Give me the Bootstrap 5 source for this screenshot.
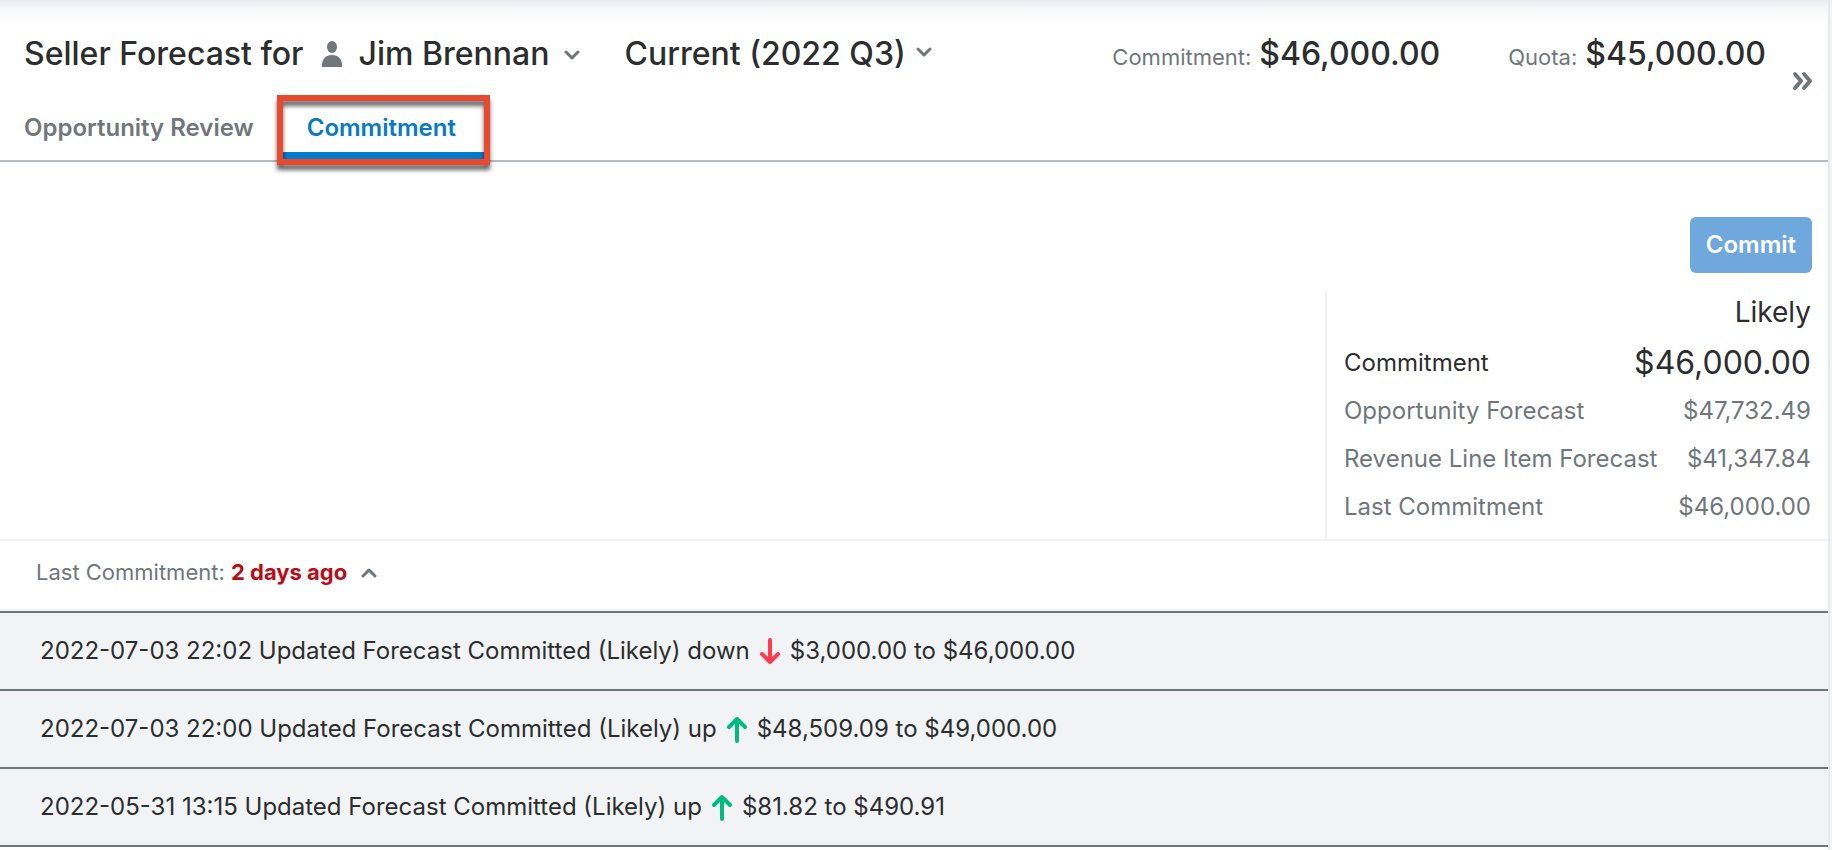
<!DOCTYPE html>
<html lang="en">
<head>
<meta charset="utf-8">
<meta name="viewport" content="width=device-width, initial-scale=1">
<title>Seller Forecast</title>
<link href="https://cdn.jsdelivr.net/npm/bootstrap@5.3.0/dist/css/bootstrap.min.css" rel="stylesheet">
<style>
  body { font-family: Inter, "Liberation Sans", sans-serif; font-size: 24px; line-height: 32px; color: #2b2d2e; background: #f1f3f5; }
  .panel { background: #fff; border-right: 2px solid #e6eaed; margin-right: 2px; min-height: 100vh; }
  .top-shade { background: linear-gradient(#e8eaed, #f6f7f8 8px, #fff 22px); padding: 32px 62px 0 24px; }
  .title-text { font-size: 32px; line-height: 44px; font-weight: 500; }
  .muted { color: #6f777b; }
  .meta-label { font-size: 22px; }
  .plain { background: none; border: 0; padding: 0; color: inherit; }
  .plain svg { display: block; }
  .seller { gap: 15px; }
  .period { margin-left: 44px; }
  .quota { margin-left: 68px; }
  .rail-btn { top: 70px; right: 14px; }
  .tab-bar { border-bottom: 2px solid #b5bcc0; padding: 36px 0 0 24px; }
  .tab-bar a { font-weight: 600; color: #6f777b; text-decoration: none; padding: 0 0 16px; }
  .tab-bar a.current { color: #0679c8; padding: 0 28px 8px 24px; margin-left: 29px; border-bottom: 8px solid #0679c8; }
  .tab-bar a.current::after { content: ""; position: absolute; inset: -17px -6px -13px; border: 6px solid #e8492f; filter: drop-shadow(0 5px 2px #0009); }
  .btn-commit { background: #6fa8dc; color: #fff; font-weight: 600; line-height: 32px; padding: 12px 16px; border: 0; border-radius: 6px; margin: 0 16px 18px 0; }
  .summary { border-bottom: 2px solid #f1f2f3; padding-top: 55px; }
  .totals { width: 503px; max-width: 100%; border-left: 2px solid #f1f2f3; padding: 0 16px 8px; }
  .totals tr { height: 48px; }
  .totals th { font-weight: 400; white-space: nowrap; }
  .totals .col-title { font-size: 28px; padding-bottom: 8px; }
  .totals .big-sum { font-size: 32px; }
  .last-line { font-size: 22px; padding: 15px 36px 21px; border-bottom: 2px solid #f1f2f3; }
  .late { color: #bd0a17; font-weight: 700; margin-right: 14px; }
  .log { border-top: 2px solid #6d767b; }
  .log li { background: #f1f3f5; border-bottom: 2px solid #6d767b; padding: 22px 40px; }
</style>
</head>
<body>
<main class="panel position-relative">
  <header class="top-shade d-flex align-items-center">
    <h1 class="title-text mb-0 me-3">Seller Forecast for</h1>
    <button type="button" class="plain seller title-text d-flex align-items-center" aria-label="Choose seller: Jim Brennan">
      <svg width="24" height="26" viewBox="0 0 24 26" fill="#6f777b"><ellipse cx="13" cy="6" rx="5" ry="6"/><path d="M3 26v-2c0-6 4-10 10-10s10 4 10 10v2z"/></svg>
      <span>Jim Brennan</span>
      <svg width="16" height="12" viewBox="0 0 16 12" fill="none" stroke="#6f777b" stroke-width="3" stroke-linecap="round" stroke-linejoin="round"><path d="M2 4l6 6 6-6"/></svg>
    </button>
    <button type="button" class="plain period title-text d-flex align-items-center">
      <span>Current (2022 Q3)</span>
      <svg class="ms-2 mb-1" width="20" height="12" viewBox="0 0 20 12" fill="none" stroke="#6f777b" stroke-width="3" stroke-linecap="round" stroke-linejoin="round"><path d="M4 3l6 6 6-6"/></svg>
    </button>
    <div class="ms-auto d-flex align-items-baseline gap-2"><span class="meta-label muted">Commitment:</span><span class="title-text">$46,000.00</span></div>
    <div class="quota d-flex align-items-baseline gap-2"><span class="meta-label muted">Quota:</span><span class="title-text">$45,000.00</span></div>
  </header>
  <button type="button" class="plain rail-btn position-absolute" aria-label="Expand side panel"><svg width="24" height="22" viewBox="0 0 24 22" fill="none" stroke="#6f777b" stroke-width="4" stroke-linecap="round" stroke-linejoin="round"><path d="M5 4l6 7-6 7M14 4l6 7-6 7"/></svg></button>
  <nav class="tab-bar d-flex" aria-label="Forecast views">
    <a href="#review">Opportunity Review</a>
    <a href="#commitment" class="current position-relative" aria-current="page">Commitment</a>
  </nav>
  <section class="summary d-flex flex-column align-items-end" id="commitment">
    <button type="button" class="btn btn-commit fs-4">Commit</button>
    <div class="totals">
      <table class="d-block">
        <thead class="d-block"><tr class="d-flex align-items-center justify-content-end"><th scope="col" class="col-title">Likely</th></tr></thead>
        <tbody class="d-block">
          <tr class="d-flex align-items-center justify-content-between"><th scope="row">Commitment</th><td class="big-sum">$46,000.00</td></tr>
          <tr class="muted d-flex align-items-center justify-content-between"><th scope="row">Opportunity Forecast</th><td>$47,732.49</td></tr>
          <tr class="muted d-flex align-items-center justify-content-between"><th scope="row">Revenue Line Item Forecast</th><td>$41,347.84</td></tr>
          <tr class="muted d-flex align-items-center justify-content-between"><th scope="row">Last Commitment</th><td>$46,000.00</td></tr>
        </tbody>
      </table>
    </div>
  </section>
  <div class="last-line d-flex align-items-center">
    <span class="muted">Last Commitment:&nbsp;</span><span class="late">2 days ago</span>
    <button type="button" class="plain" aria-label="Hide history"><svg width="16" height="12" viewBox="0 0 16 12" fill="none" stroke="#6f777b" stroke-width="3" stroke-linecap="round" stroke-linejoin="round"><path d="M2 10l6-6 6 6"/></svg></button>
  </div>
  <ul class="log list-unstyled mb-0">
    <li class="d-flex align-items-center"><span>2022-07-03 22:02 Updated Forecast Committed (Likely) down</span>
      <svg class="mx-2" width="24" height="28" viewBox="0 0 24 28" fill="none" stroke="#ff3a52" stroke-width="4" stroke-linecap="round" stroke-linejoin="round" role="img" aria-label="down"><path d="M12 3v22M4 17l8 8 8-8"/></svg>
      <span>$3,000.00 to $46,000.00</span></li>
    <li class="d-flex align-items-center"><span>2022-07-03 22:00 Updated Forecast Committed (Likely) up</span>
      <svg class="mx-2" width="24" height="28" viewBox="0 0 24 28" fill="none" stroke="#00ba83" stroke-width="4" stroke-linecap="round" stroke-linejoin="round" role="img" aria-label="up"><path d="M12 26V4M4 12l8-8 8 8"/></svg>
      <span>$48,509.09 to $49,000.00</span></li>
    <li class="d-flex align-items-center"><span>2022-05-31 13:15 Updated Forecast Committed (Likely) up</span>
      <svg class="mx-2" width="24" height="28" viewBox="0 0 24 28" fill="none" stroke="#00ba83" stroke-width="4" stroke-linecap="round" stroke-linejoin="round" role="img" aria-label="up"><path d="M12 26V4M4 12l8-8 8 8"/></svg>
      <span>$81.82 to $490.91</span></li>
  </ul>
</main>
<script src="https://cdn.jsdelivr.net/npm/bootstrap@5.3.0/dist/js/bootstrap.bundle.min.js"></script>
</body>
</html>
